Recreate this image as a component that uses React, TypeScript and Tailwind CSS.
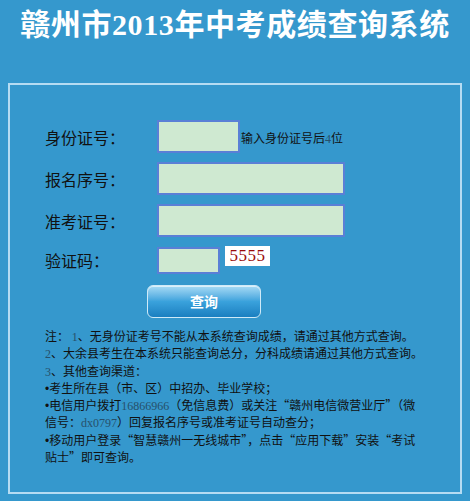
import React from "react";

const cjk = { fontFamily: '"Noto Sans CJK SC", sans-serif' };
const serif = { fontFamily: '"Liberation Serif", "Noto Sans CJK SC", serif' };

function Num({ children }: { children: React.ReactNode }) {
  return (
    <span className="text-[#27506b]" style={serif}>
      {children}
    </span>
  );
}

function Dot() {
  return (
    <span className="text-[12px]" style={{ fontFamily: '"Liberation Sans", sans-serif' }}>
      •
    </span>
  );
}

export default function App() {
  return (
    <div className="w-[470px] h-[501px] bg-[#3598cd] overflow-hidden" style={cjk}>
      <div className="h-[83px] pt-[8px] text-center">
        <h1
          className="text-white font-bold text-[30px] leading-[34px] tracking-[0.6px]"
          style={serif}
        >
          赣州市2013年中考成绩查询系统
        </h1>
      </div>
      <div className="mx-[8px] h-[411px] border-2 border-[#b5dcf3] pt-[35px] pl-[35px]">
        <div className="flex flex-col">
          <div className="flex items-center h-[33px]">
            <div className="w-[112px] text-[16px] text-[#111]">身份证号：</div>
            <div className="w-[83px] h-[33px] bg-[#cfe9d1] border-2 border-[#5a7fd6]" />
            <div className="text-[12px] text-[#111] ml-[1px] mt-[4px]">
              输入身份证号后<span style={serif} className="text-[#27506b]">4</span>位
            </div>
          </div>
          <div className="flex items-center h-[33px] mt-[9px]">
            <div className="w-[112px] text-[16px] text-[#111]">报名序号：</div>
            <div className="w-[188px] h-[33px] bg-[#cfe9d1] border-2 border-[#5a7fd6]" />
          </div>
          <div className="flex items-center h-[33px] mt-[9px]">
            <div className="w-[112px] text-[16px] text-[#111]">准考证号：</div>
            <div className="w-[188px] h-[33px] bg-[#cfe9d1] border-2 border-[#5a7fd6]" />
          </div>
          <div className="flex items-start h-[27px] mt-[10px]">
            <div className="w-[112px] text-[16px] leading-[27px] text-[#111]">验证码：</div>
            <div className="w-[63px] h-[27px] bg-[#cfe9d1] border-2 border-[#5a7fd6]" />
            <div
              className="ml-[5px] -mt-[1px] w-[45px] h-[20px] bg-white text-[#9a0a0a] text-[17px] leading-[20px] text-center tracking-[0.5px]"
              style={serif}
            >
              5555
            </div>
          </div>
          <div className="ml-[102px] mt-[11px]">
            <button
              className="w-[114px] h-[33px] rounded-[6px] border border-[#cfeaf8] bg-gradient-to-b from-[#a6dbf5] via-[#3aa2dc] to-[#1a7fc0] text-white font-bold text-[14px] shadow-[inset_0_1px_0_rgba(255,255,255,0.6)]"
              style={cjk}
            >
              查询
            </button>
          </div>
        </div>
        <div className="mt-[10px] text-[12px] leading-[16.3px] text-[#111] whitespace-nowrap">
          <div>
            注： <Num>1</Num>、无身份证考号不能从本系统查询成绩，请通过其他方式查询。
          </div>
          <div>
            <Num>2</Num>、大余县考生在本系统只能查询总分，分科成绩请通过其他方式查询。
          </div>
          <div>
            <Num>3</Num>、其他查询渠道：
          </div>
          <div>
            <Dot />考生所在县（市、区）中招办、毕业学校；
          </div>
          <div>
            <Dot />电信用户拨打<Num>16866966</Num>（免信息费）或关注“赣州电信微营业厅”（微
          </div>
          <div>
            信号：<Num>dx0797</Num>）回复报名序号或准考证号自动查分；
          </div>
          <div>
            <Dot />移动用户登录“智慧赣州一无线城市”，点击“应用下载”安装“考试
          </div>
          <div>贴士”即可查询。</div>
        </div>
      </div>
    </div>
  );
}
